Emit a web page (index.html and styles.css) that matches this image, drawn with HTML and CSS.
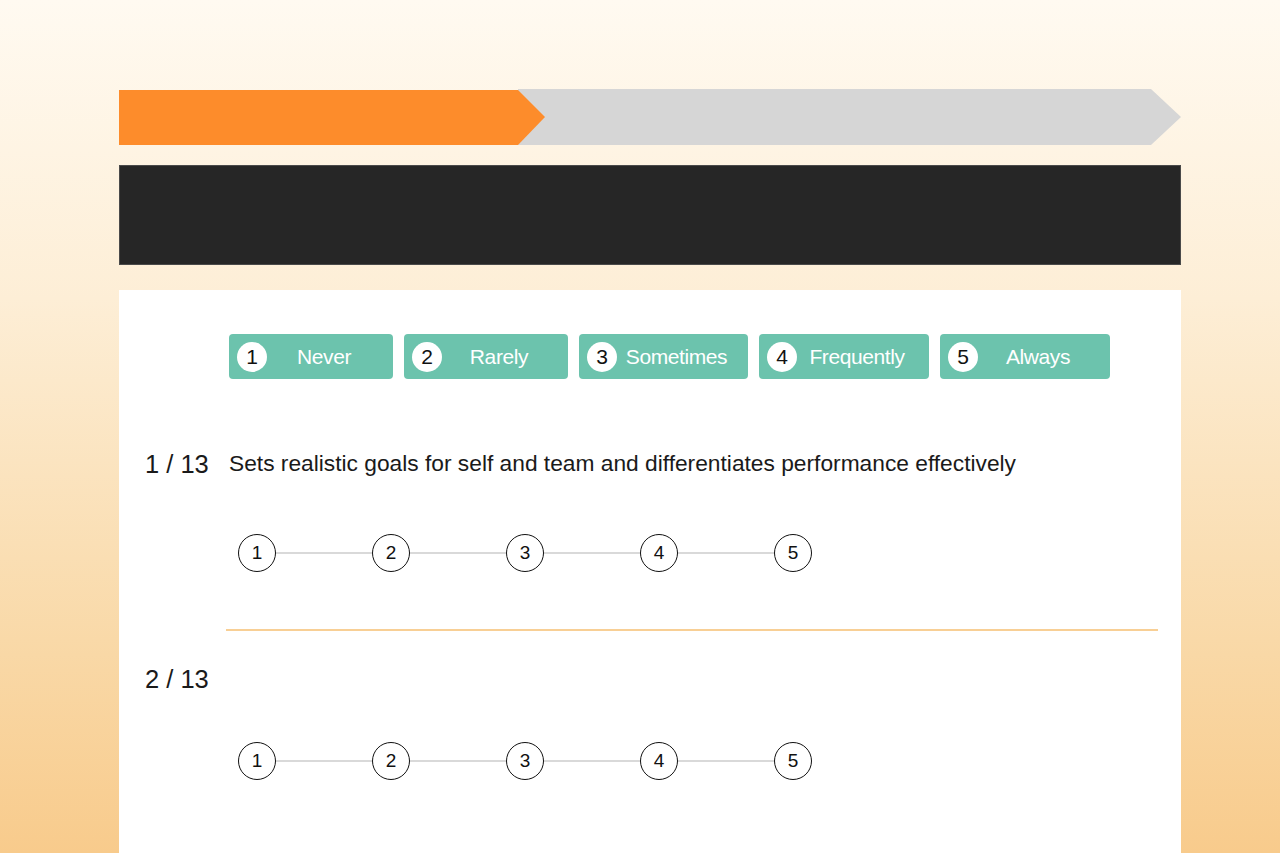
FILE: index.html
```html
<!DOCTYPE html>
<html>
  <head>
    <title>Leadership Survey</title>
    <link rel="stylesheet" href="styles.css">
  </head>
  <body>
    <div class="page">
      <div class="progress">
        <div class="progress-done"></div>
        <div class="progress-todo"></div>
      </div>
      <div class="banner"></div>
      <div class="card">
        <div class="legend">
          <div class="legend-btn w1"><span class="num">1</span><span class="lbl">Never</span></div>
          <div class="legend-btn w1"><span class="num">2</span><span class="lbl">Rarely</span></div>
          <div class="legend-btn w2"><span class="num">3</span><span class="lbl">Sometimes</span></div>
          <div class="legend-btn w3"><span class="num">4</span><span class="lbl">Frequently</span></div>
          <div class="legend-btn w3"><span class="num">5</span><span class="lbl">Always</span></div>
        </div>

        <div class="question">
          <div class="q-head">
            <span class="q-count">1 / 13</span>
            <span class="q-text">Sets realistic goals for self and team and differentiates performance effectively</span>
          </div>
          <div class="scale">
            <span class="dot">1</span><span class="line"></span>
            <span class="dot">2</span><span class="line"></span>
            <span class="dot">3</span><span class="line"></span>
            <span class="dot">4</span><span class="line"></span>
            <span class="dot">5</span>
          </div>
        </div>

        <hr class="divider">

        <div class="question empty">
          <div class="q-head">
            <span class="q-count">2 / 13</span>
            <span class="q-text"></span>
          </div>
          <div class="scale">
            <span class="dot">1</span><span class="line"></span>
            <span class="dot">2</span><span class="line"></span>
            <span class="dot">3</span><span class="line"></span>
            <span class="dot">4</span><span class="line"></span>
            <span class="dot">5</span>
          </div>
        </div>
      </div>
    </div>
  </body>
</html>
```

FILE: styles.css
```css
html, body {
  margin: 0;
  height: 100%;
}
body {
  font-family: "Liberation Sans", Arial, sans-serif;
  background: linear-gradient(to bottom, #fffaf1 0%, #fdeed6 35%, #f9d9a8 75%, #f8cb8c 100%);
  overflow: hidden;
}
.page {
  width: 1062px;
  padding-left: 119px;
  padding-top: 89px;
}
.progress {
  display: flex;
  height: 56px;
}
.progress-done {
  width: 426px;
  background: #fd8c2b;
  clip-path: polygon(0 1px, 399px 1px, 100% 50%, 399px 100%, 0 100%);
  position: relative;
  z-index: 1;
}
.progress-todo {
  flex: 1;
  margin-left: -27px;
  background: #d6d6d6;
  clip-path: polygon(0 0, calc(100% - 30px) 0, 100% 50%, calc(100% - 30px) 100%, 0 100%);
}
.banner {
  margin-top: 20px;
  height: 98px;
  background: #262626;
  border: 1px solid #4a4a4a;
  width: 1060px;
}
.card {
  margin-top: 25px;
  background: #fff;
  padding: 44px 23px 80px 26px;
}
.legend {
  display: flex;
  gap: 11px;
  margin-left: 84px;
}
.legend-btn {
  height: 45px;
  background: #6cc3ad;
  border-radius: 4px;
  display: flex;
  align-items: center;
  padding-left: 8px;
  box-sizing: border-box;
  color: #fff;
  font-size: 21px;
}
.legend-btn.w1 {
  width: 164px;
}
.legend-btn.w2 {
  width: 169px;
}
.legend-btn.w3 {
  width: 170px;
}
.num {
  width: 30px;
  height: 30px;
  border-radius: 50%;
  background: #fff;
  color: #111;
  display: flex;
  align-items: center;
  justify-content: center;
  font-size: 21px;
  flex-shrink: 0;
}
.lbl {
  flex: 1;
  text-align: center;
  padding-right: 12px;
  letter-spacing: -0.4px;
}
.question {
  margin-top: 68px;
}
.q-head {
  display: flex;
  min-height: 30px;
  align-items: center;
}
.q-count {
  width: 84px;
  font-size: 25.5px;
  color: #1a1a1a;
  padding-top: 3px;
}
.q-text {
  font-size: 22.75px;
  color: #1a1a1a;
}
.scale {
  display: flex;
  align-items: center;
  margin: 55px 0 0 93px;
}
.question.empty .scale {
  margin-top: 48px;
}
.question.empty {
  margin-top: 31px;
}
.dot {
  width: 38px;
  height: 38px;
  border: 1.7px solid #111;
  border-radius: 50%;
  box-sizing: border-box;
  display: flex;
  align-items: center;
  justify-content: center;
  font-size: 19px;
  color: #111;
}
.line {
  width: 96px;
  height: 2px;
  background: #d9d9d9;
}
.divider {
  border: none;
  height: 2px;
  background: #f8cf95;
  margin: 57px 0 0 81px;
}
```
